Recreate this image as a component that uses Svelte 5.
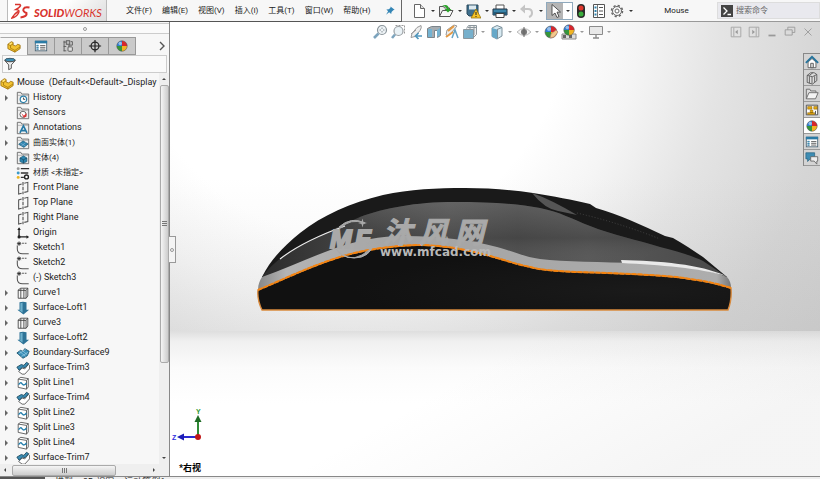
<script>
  const ball = `<path d="M8 8V2a6 6 0 0 0-6 6z" fill="#2f7fd6"/><path d="M8 8V2a6 6 0 0 1 6 6z" fill="#d8262c"/><path d="M8 8h6a6 6 0 0 1-6 6z" fill="#f0b323"/><path d="M8 8v6a6 6 0 0 1-6-6z" fill="#36963b"/><circle cx="6" cy="5" r="2" fill="#fff" opacity=".5"/><circle cx="8" cy="8" r="6" fill="none" stroke="#555" stroke-width=".6"/>`;
  const folder = `<path d="M1.500 14.500v-13h4l1 2h8v11z" fill="#eee" stroke="#666"/><path d="M2 5h12" stroke="#888" stroke-width=".6"/>`;

  // 16x16 icon bodies
  const icons = {
    part: `<path d="M1 6l4-3 2 1v3l3 1 2-2 3 1v4l-6 4-8-4z" fill="#f2c230" stroke="#9a6d08" stroke-width=".9"/><path d="M1 6l3 1.500 3-2M4 7.500v3l5 2.500 6-4M9 13v2" fill="none" stroke="#9a6d08" stroke-width=".8"/><path d="M2 6l3-2 1 .6L4 6.500z" fill="#ffe98a"/>`,
    props: `<rect x="1.500" y="2.500" width="13" height="11" fill="#fff" stroke="#4c6474"/><path d="M1 2h14v3H1z" fill="#2b7ba5"/><path d="M3 7h2v1H3zM3 9h2v1H3zM3 11h2v1H3z" fill="#2b7ba5" stroke="#2b7ba5" stroke-width=".5"/><path d="M7 7.500h6M7 9.500h6M7 11.500h6" stroke="#555"/>`,
    config: `<path d="M3.500 2v12M3 3.500h3M3 8.500h3M3 13.500h3" stroke="#555" fill="none"/><rect x="6" y="2" width="4" height="4" fill="#bbb" stroke="#555"/><path d="M11 3h2v4H9v3" fill="none" stroke="#555"/><rect x="8" y="9" width="5" height="5" rx="1" fill="#ddd" stroke="#555"/>`,
    target: `<circle cx="8" cy="8" r="4.500" fill="none" stroke="#222" stroke-width="1.400"/><path d="M8 1v14M1 8h14" stroke="#222" stroke-width="1.400"/>`,
    ball,
    filter: `<ellipse cx="8" cy="3.500" rx="6" ry="2" fill="#3d8fb5" stroke="#33505f"/><path d="M2 4l4.500 5v5.500l3-1.500V9L14 4c-3 2-9 2-12 0z" fill="#f0f0f0" stroke="#444"/>`,
    history: folder + `<circle cx="8.500" cy="9.500" r="3.700" fill="#fff" stroke="#2c7fa8" stroke-width="1.400"/><path d="M8.500 7.500v2h2" fill="none" stroke="#333"/>`,
    sensors: folder + `<circle cx="8" cy="9.500" r="3.500" fill="#fff" stroke="#555"/><path d="M6 8l3 3 3-3v4l-3 1.500z" fill="#d33"/>`,
    annotations: folder + `<path d="M4.500 13.500L8.500 5.500l4 8M6 11h5" fill="none" stroke="#2478a5" stroke-width="1.800"/>`,
    surfaces: folder + `<path d="M3 9.500l5-4 6 3.500-5 4z" fill="#2e86b0" stroke="#1c516b" stroke-width=".7"/><path d="M5 8l6 3.500M11 7.500l-5 4" stroke="#9bd" stroke-width=".6"/>`,
    solids: folder + `<path d="M4.500 8l4-2.500 4 2.500v4l-4 2-4-2z" fill="#2e86b0" stroke="#1c516b" stroke-width=".7"/><path d="M4.500 8l4 2 4-2M8.500 10v4" fill="none" stroke="#123d52" stroke-width=".7"/>`,
    material: `<circle cx="2.500" cy="3" r="1.700" fill="#999"/><circle cx="2.500" cy="8" r="1.700" fill="#3c9bc9"/><circle cx="2.500" cy="13" r="1.700" fill="#e9b320"/><path d="M5.500 3H15M5.500 8H14M5.500 13H9" stroke="#333" stroke-width="1.500"/><circle cx="12" cy="12.500" r="2.200" fill="#fff" stroke="#222" stroke-width="1.600"/>`,
    plane: `<path d="M6.500 3.500l-3.500 1v10.500l3.500-1M9.500 2.500l4-1v10.500l-4 1" fill="none" stroke="#555" stroke-width="1.200"/><path d="M8 1v14" stroke="#444" stroke-width="1.200" stroke-dasharray="4 1.500"/>`,
    origin: `<path d="M3.500 3v9.500H13" fill="none" stroke="#222" stroke-width="1.500"/><path d="M1.500 4.500l2-3 2 3zM12 10.500l3 2-3 2z" fill="#222"/><circle cx="3.500" cy="12.500" r="1.800" fill="#222"/>`,
    sketch: `<path d="M1.500 5v4q0 5.500 6 5.500h7M7 2.500h2M10 2.500h2" fill="none" stroke="#555" stroke-width="1.200"/><path d="M3.500.5v5M1 3h5M1.800 1.200l3.500 3.500M5.300 1.200L1.800 4.700" stroke="#222" stroke-width=".9"/>`,
    curve: `<path d="M2.500 4.500l3-2 8 0v9l-2 2.500h-9z" fill="#f5f5f5" stroke="#444"/><path d="M5.500 3v11M9 3v11M11.500 5v9M2.500 5h9l2-2.500" fill="none" stroke="#444"/>`,
    loft: `<path d="M4 1.500q4-1.500 8 0V10h3l-6.500 5.500L1.500 10H4z" fill="#2e7397"/><path d="M5 2.500q1-.5 2.500-.500v11L3.500 10.700H5z" fill="#6db0cc"/>`,
    boundary: `<path d="M1 8l4-3 3 1 2-3 5 3-2 5-5 3z" fill="#3a8fb8" stroke="#1c526c"/><path d="M4 6l7 6M7 5l6 5M3 9l8-5M6 12l8-5" stroke="#a7d6ea" stroke-width=".7"/>`,
    trim: `<path d="M3 12l4-4 3 1 4-5 1.500 1v4l-5.500 6-3 0z" fill="#fff" stroke="#555"/><path d="M1 7l5-3 3 1 3-3.500 2.500 1.500-4 4.500-3-.5L3.500 10.500z" fill="#3a8db4" stroke="#1d485e"/>`,
    split: `<path d="M2.500 3.500l3-2 8.500 1.500v9.500l-2 2.500-9.500-2z" fill="#fff" stroke="#555"/><path d="M2.500 3.500l9.500 1.500 2-2M12 5v10" fill="none" stroke="#555"/><path d="M3 10q2-4 4-1t5-1" fill="none" stroke="#2680ad" stroke-width="1.500"/>`,
    fresh: `<path d="M3.500 1.500h6l4 4v9h-10z" fill="#fff" stroke="#666"/><path d="M9.500 1.500v4h4" fill="#ddd" stroke="#666"/>`,
    open: `<path d="M1.500 13.500v-10h4l1 1.500h5v3" fill="#eee" stroke="#555"/><path d="M1.500 13.500l3-6H15l-3 6z" fill="#f8f8f8" stroke="#555"/><path d="M4 3q6-3 7 3h2.500L10 9.500 6.500 6H9Q8 3 4 3z" fill="#2aa32a"/>`,
    save: `<path d="M2 2h11v11H4l-2-2z" fill="#3e6e8c" stroke="#2c4a5c"/><path d="M4 2.500h7v4H4z" fill="#dce8ee"/><path d="M11 6l5 9H6z" fill="#f7c325" stroke="#8b6a00" stroke-width=".7"/><path d="M11 9v3M11 13v1" stroke="#222"/>`,
    print: `<path d="M4 2h8v5H4z" fill="#fff" stroke="#555"/><path d="M1 6h14v6H1z" fill="#3b86ab" stroke="#234"/><path d="M1 9h14v3H1z" fill="#265b78"/><path d="M4 10.500h8v4H4z" fill="#fff" stroke="#444"/>`,
    undo: `<path d="M3 6h6q4 0 4 4 0 3-3 4" fill="none" stroke="#c4c4c4" stroke-width="2"/><path d="M6 1.500v9L1 6z" fill="#c4c4c4"/>`,
    pointer: `<path d="M5 1.500v11l3-2.500 2 4.500 2-1-2-4.300 3.500-.2z" fill="#fff" stroke="#444" stroke-width=".9"/>`,
    traffic: `<rect x="4" y="1" width="8" height="14" rx="4" fill="#2a2a2a"/><circle cx="8" cy="5" r="2.500" fill="#e0362c"/><circle cx="8" cy="11" r="2.500" fill="#39ad3c"/>`,
    list: `<path d="M2.500 1.500h11v13h-11z" fill="#fff" stroke="#555"/><path d="M6.500 2v12" stroke="#777"/><path d="M3.500 3.500h2v2h-2zM3.500 7h2v2h-2zM3.500 10.500h2v2h-2z" fill="#2f82ab"/><path d="M8 4.500h4M8 8h4M8 11.500h4" stroke="#555"/>`,
    gear: `<circle cx="8" cy="8" r="5.500" fill="none" stroke="#666" stroke-width="1.500" stroke-dasharray="2.200 2.120"/><circle cx="8" cy="8" r="4.500" fill="#f7f7f7" stroke="#666"/><circle cx="8" cy="8" r="2" fill="#fff" stroke="#666"/>`,
    pin: `<path d="M8 2l6 5-2 .5-2.500 2.500-.5 3-3-2.500L1.500 14 4.500 9 2 6.500l3.500-.2L8 4z" fill="#3385b5"/>`,
    zoomfit: `<circle cx="10" cy="6" r="4.500" fill="#eef3f6" stroke="#8a949a" stroke-width="1.200"/><path d="M10 3.500v5M7.500 6h5" stroke="#8a949a" stroke-dasharray="1.500 2"/><path d="M6.500 9.500L2 14" stroke="#7da4bd" stroke-width="2.600"/>`,
    zoomarea: `<path d="M5.500 1.500h9v9" fill="none" stroke="#999" stroke-dasharray="2 1"/><circle cx="8.500" cy="7" r="4.500" fill="#eaf2f6" stroke="#9a9fa3" stroke-width="1.200"/><path d="M5 10.500L2 14" stroke="#7da4bd" stroke-width="2.600"/>`,
    prev: `<path d="M13 1.500q1 2-1 5l-5 6-4 1 1-4 5-6z" fill="#eee" stroke="#999"/><path d="M3 10l5-4" stroke="#999"/><path d="M14 12H8M10.500 9l-3 3 3 3" fill="none" stroke="#5197bd" stroke-width="1.700"/>`,
    section: `<path d="M1.500 4.500l4-2h9v9l-3 2v-7h-3v7h-7z" fill="#a6adb2" stroke="#7c858b"/><path d="M2 5h4v8H2zM11 6l3-2v7l-3 2z" fill="#74b3d2"/>`,
    dynamic: `<path d="M3 6l7-5 3 1-5 6-4 4-2-1z" fill="#eee" stroke="#999"/><path d="M4 7l6-5M2 13l7-5" stroke="#e49a44" stroke-width="2"/><path d="M8 14l3-8 3 8" fill="none" stroke="#67a4c4" stroke-width="1.500"/>`,
    orient: `<path d="M4.500 4.500l2-3h8v9l-3 3" fill="#eee" stroke="#8c979d"/><path d="M1.500 5.500h10v9h-10z" fill="#77b0cc" stroke="#8c979d"/><path d="M8 2v4M12 2v9M6 3.500h8" stroke="#8c979d"/>`,
    display: `<path d="M3 4l5-2.500 5 2V12l-5 3-5-2.500z" fill="#d8eaf2" stroke="#7e929d"/><path d="M3 4l5 1.500V15L3 12.500z" fill="#66a8c8"/><path d="M8 5.500l5-2M8.500 5v9.500" stroke="#7e929d"/>`,
    eye: `<path d="M1 8q7-7 14 0-7 7-14 0z" fill="#f4f4f4" stroke="#bbb"/><circle cx="8" cy="8" r="3" fill="#777"/><path d="M8 3v10" stroke="#666"/>`,
    appear: ball + `<path d="M7 14l1-4 5-4 2 2-4 5z" fill="#f3c98b" stroke="#a77" stroke-width=".6"/>`,
    scene: `<path d="M1 10h14v5H1z" fill="#ddd" stroke="#888"/><path d="M2 11h3v3H2zM8 11h3v3H8z" fill="#666"/><g transform="translate(1 -1) scale(.88)">${ball}</g>`,
    monitor: `<path d="M1.500 2.500h13v8h-13z" fill="#e8e8e8" stroke="#8b8b8b"/><path d="M8 10.500v3M5 14h6" stroke="#8b8b8b" stroke-width="1.400"/>`,
    home: `<path d="M3.500 8v6.500h9V8L8 4z" fill="#fff" stroke="#555"/><path d="M1 9l7-7 7 7" fill="none" stroke="#26749c" stroke-width="2.200"/><path d="M6.500 9.500h3v5h-3z" fill="#ddd" stroke="#555"/>`,
    library: `<path d="M2.500 5l4-3 4 0 3 2v7l-5 4-6-2z" fill="#ddd" stroke="#555"/><path d="M5 6v8M8 6.500v8M2.500 5l6 1.500 5-2.500M11 6v6.500M5 5l4-3" fill="none" stroke="#555"/>`,
    explorer: `<path d="M1.500 13.500v-11h4l1 2h6v2" fill="#ddd" stroke="#666"/><path d="M1.500 13.500l3-7H15l-3 7z" fill="#f4f4f4" stroke="#666"/>`,
    palette: `<path d="M1.500 2.500h13v11h-13z" fill="#fff" stroke="#444"/><path d="M3 4h5v3H3zM10 4h4v3h-4zM3 11h8v2H3zM6 8h3v3H6z" fill="#e5aa12" stroke="#735100" stroke-width=".5"/><path d="M12 9v4" stroke="#444"/>`,
    forum: `<path d="M1 2h10v7H6l-3 3V9H1z" fill="#3d8cb3" stroke="#27617f" stroke-width=".8"/><path d="M6.500 6.500h8v5h-1V15l-3-3.500h-4z" fill="#eee" stroke="#666"/>`,
    dockleft: `<path d="M2.500 2.500h11v11h-11zM5.500 3v10" fill="none" stroke="#a2a2a2"/><path d="M10 5.500v5L7 8z" fill="#999"/>`,
    dockright: `<path d="M2.500 2.500h11v11h-11zM10.500 3v10" fill="none" stroke="#a2a2a2"/><path d="M6 5.500v5L9 8z" fill="#999"/>`,
    minimize: `<path d="M4 11h8v2H4z" fill="#999"/>`,
    restore: `<path d="M5.500 5.500v-3h8v6h-3M2.500 5.500h8v6h-8z" fill="none" stroke="#999"/>`,
    close: `<path d="M4 4l8 8M12 4l-8 8" stroke="#999"/>`,
  };

  const menus = ['文件(F)', '编辑(E)', '视图(V)', '插入(I)', '工具(T)', '窗口(W)', '帮助(H)'];

  const fileTools = [
    { icon: 'fresh', label: 'New', more: true },
    { icon: 'open', label: 'Open', more: true },
    { icon: 'save', label: 'Save', more: true },
    { icon: 'print', label: 'Print', more: true },
    { icon: 'undo', label: 'Undo', more: true },
    { icon: 'pointer', label: 'Select', more: true, active: true },
    { icon: 'traffic', label: 'Rebuild' },
    { icon: 'list', label: 'File properties' },
    { icon: 'gear', label: 'Options', more: true },
  ];

  const viewTools = [
    { icon: 'zoomfit', label: 'Zoom to fit' },
    { icon: 'zoomarea', label: 'Zoom to area' },
    { icon: 'prev', label: 'Previous view' },
    { icon: 'section', label: 'Section view' },
    { icon: 'dynamic', label: 'Dynamic annotation' },
    { icon: 'orient', label: 'View orientation', more: true },
    { icon: 'display', label: 'Display style', more: true },
    { icon: 'eye', label: 'Hide or show', more: true },
    { icon: 'appear', label: 'Edit appearance' },
    { icon: 'scene', label: 'Apply scene', more: true },
    { icon: 'monitor', label: 'View settings', more: true },
  ];

  const panelTabs = ['part', 'props', 'config', 'target', 'ball'];
  const windowTools = ['dockleft', 'dockright', 'minimize', 'restore', 'close'];
  const taskTabs = ['home', 'library', 'explorer', 'palette', 'ball', 'props', 'forum'];

  const tree = [
    { icon: 'history', name: 'History', open: true },
    { icon: 'sensors', name: 'Sensors' },
    { icon: 'annotations', name: 'Annotations', open: true },
    { icon: 'surfaces', name: '曲面实体(1)', open: true, cjk: true },
    { icon: 'solids', name: '实体(4)', open: true, cjk: true },
    { icon: 'material', name: '材质 <未指定>', cjk: true },
    { icon: 'plane', name: 'Front Plane' },
    { icon: 'plane', name: 'Top Plane' },
    { icon: 'plane', name: 'Right Plane' },
    { icon: 'origin', name: 'Origin' },
    { icon: 'sketch', name: 'Sketch1' },
    { icon: 'sketch', name: 'Sketch2' },
    { icon: 'sketch', name: '(-) Sketch3' },
    { icon: 'curve', name: 'Curve1', open: true },
    { icon: 'loft', name: 'Surface-Loft1', open: true },
    { icon: 'curve', name: 'Curve3', open: true },
    { icon: 'loft', name: 'Surface-Loft2', open: true },
    { icon: 'boundary', name: 'Boundary-Surface9', open: true },
    { icon: 'trim', name: 'Surface-Trim3', open: true },
    { icon: 'split', name: 'Split Line1', open: true },
    { icon: 'trim', name: 'Surface-Trim4', open: true },
    { icon: 'split', name: 'Split Line2', open: true },
    { icon: 'split', name: 'Split Line3', open: true },
    { icon: 'split', name: 'Split Line4', open: true },
    { icon: 'trim', name: 'Surface-Trim7', open: true },
  ];

  let panelTab = $state('part');
  let taskTab = $state('ball');
  let search = $state('');
</script>

{#snippet icon(name)}
  <svg class="icon" viewBox="0 0 16 16" aria-hidden="true">{@html icons[name]}</svg>
{/snippet}

{#snippet tool(t)}
  <div class="tool" class:active={t.active}>
    <button class="tool-main" aria-label={t.label}>{@render icon(t.icon)}</button>
    {#if t.more}
      <button class="more" aria-label="{t.label} options"><i class="caret"></i></button>
    {/if}
  </div>
{/snippet}

<div class="app">
  <header>
    <div class="menubar">
      <div class="brand">
        <svg class="ds" viewBox="0 0 20 18" aria-hidden="true">
          <path d="M4 2.500h5q1.500 1-1.500 3.500L5 7.500q4 0 2.500 3.500-2 4-6.500 5 3-5 6-6.500" fill="none" stroke="#d8342e" stroke-width="1.500" />
          <path d="M18.500 5.500q-5-1-6 1.500t3 4q1 3.500-6 4.500" fill="none" stroke="#d8342e" stroke-width="2" />
        </svg>
        <span class="logo"><b>SOLID</b>WORKS</span>
      </div>
      <nav>
        {#each menus as menu}
          <button>{menu}</button>
        {/each}
      </nav>
      <button class="pin" aria-label="Pin">{@render icon('pin')}</button>
    </div>
    <div class="quickbar">
      {#each fileTools as t}
        {@render tool(t)}
      {/each}
      <span class="title">Mouse</span>
      <label class="search">
        <svg class="prompt" viewBox="0 0 12 12" aria-hidden="true">
          <rect width="12" height="12" fill="#444" />
          <path d="M2.500 2.500L6 6 2.500 9.500M6.500 9.500H10" fill="none" stroke="#fff" stroke-width="1.300" />
        </svg>
        <input type="text" placeholder="搜索命令" aria-label="搜索命令" bind:value={search} />
      </label>
    </div>
  </header>

  <main>
    <aside>
      <div class="grip"><i></i></div>
      <div class="tabs">
        {#each panelTabs as name}
          <button class:current={panelTab === name} aria-label={name} onclick={() => (panelTab = name)}>
            {@render icon(name)}
          </button>
        {/each}
        <button class="next" aria-label="More tabs">
          <svg viewBox="0 0 8 10" aria-hidden="true"><path d="M2 1l4 4-4 4" fill="none" stroke="#555" stroke-width="1.400" /></svg>
        </button>
      </div>
      <div class="filter">{@render icon('filter')}</div>
      <div class="tree-wrap">
        <ul class="tree">
          <li class="root">
            {@render icon('part')}
            <span>Mouse&nbsp; (Default&lt;&lt;Default&gt;_Display</span>
          </li>
          {#each tree as item}
            <li>
              <i class="twist" class:shown={item.open}></i>
              {@render icon(item.icon)}
              <span class:cjk={item.cjk}>{item.name}</span>
            </li>
          {/each}
        </ul>
        <div class="vscroll">
          <i class="arrow up"></i>
          <div class="thumb"></div>
          <i class="arrow down"></i>
        </div>
      </div>
      <div class="hscroll">
        <i class="arrow left"></i>
        <div class="thumb"></div>
        <i class="arrow right"></i>
      </div>
    </aside>

    <section class="viewport">
      <svg class="scene" viewBox="170 22 650 454" preserveAspectRatio="none" aria-label="Mouse model">
        <defs>
          <radialGradient id="wall" gradientUnits="userSpaceOnUse" cx="350" cy="20" r="600">
            <stop offset=".36" stop-color="#fff" />
            <stop offset=".48" stop-color="#f5f5f5" />
            <stop offset=".62" stop-color="#e4e4e4" />
            <stop offset=".8" stop-color="#d5d5d5" />
            <stop offset="1" stop-color="#cdcdcd" />
          </radialGradient>
          <linearGradient id="wallFoot" x1="0" y1="0" x2="0" y2="1">
            <stop offset=".5" stop-color="#888" stop-opacity="0" />
            <stop offset="1" stop-color="#888" stop-opacity=".1" />
          </linearGradient>
          <linearGradient id="floor" x1="0" y1="0" x2="0" y2="1">
            <stop offset="0" stop-color="#dedede" />
            <stop offset=".07" stop-color="#f0f0f0" />
            <stop offset=".25" stop-color="#fbfbfb" />
            <stop offset=".5" stop-color="#fff" />
          </linearGradient>
          <linearGradient id="floorSide" x1="0" y1="0" x2="1" y2=".4">
            <stop offset=".5" stop-color="#999" stop-opacity="0" />
            <stop offset="1" stop-color="#999" stop-opacity=".1" />
          </linearGradient>
          <linearGradient id="shell" x1="0" y1="0" x2="1" y2="0">
            <stop offset="0" stop-color="#2c2c2c" />
            <stop offset=".2" stop-color="#444" />
            <stop offset=".4" stop-color="#5a5a5a" />
            <stop offset=".55" stop-color="#505050" />
            <stop offset=".7" stop-color="#5a5a5a" />
            <stop offset="1" stop-color="#484848" />
          </linearGradient>
          <linearGradient id="shade" x1="0" y1="0" x2="0" y2="1">
            <stop offset="0" stop-color="#777" stop-opacity=".35" />
            <stop offset=".6" stop-color="#333" stop-opacity=".35" />
            <stop offset="1" stop-color="#666" stop-opacity="0" />
          </linearGradient>
          <linearGradient id="rim" x1="0" y1="0" x2="1" y2="0">
            <stop offset="0" stop-color="#888" />
            <stop offset=".06" stop-color="#b4b4b4" />
            <stop offset=".3" stop-color="#a4a4a4" />
            <stop offset=".97" stop-color="#adadad" />
            <stop offset="1" stop-color="#777" />
          </linearGradient>
          <radialGradient id="base" cx=".8" cy=".7" r=".6">
            <stop offset="0" stop-color="#1a1a1a" />
            <stop offset="1" stop-color="#111" />
          </radialGradient>
        </defs>
        <rect x="170" y="22" width="650" height="309" fill="url(#wall)" />
        <rect x="170" y="22" width="650" height="309" fill="url(#wallFoot)" />
        <rect x="170" y="331" width="650" height="145" fill="url(#floor)" />
        <rect x="170" y="331" width="650" height="145" fill="url(#floorSide)" />

        <path d="M262 277C271 259 284 246 300 233C323 215 350 203 383 195C410 189 437 188 465 188C490 188 512 190 533 193C553 196 573 200 590 204L596 208C620 215 642 225 665 236L673 238C685 245 694 251 703 257L727 277L700 275L270 280Z" fill="#1a1a1a" />
        <path d="M262 277C268 269 276 261 290 251C310 240 340 226 360 217C385 208 415 202 455 202C485 202 515 203 540 208C560 212 572 219 590 226C612 235 638 240 660 247C680 252 695 257 703 261L727 277L700 270L540 262L450 241L400 240L262 280Z" fill="url(#shell)" />
        <path d="M360 217C385 208 415 202 455 202C485 202 515 203 540 208C560 212 572 219 590 226C612 235 638 240 660 247L640 262L540 259L480 243L400 237L340 246Z" fill="url(#shade)" />
        <path d="M532 193Q550 199 577 215L558 211Q545 209 532 193Z" fill="#555" />
        <path d="M577 213Q620 223 660 239" fill="none" stroke="#444" stroke-dasharray="1 2" />
        <path d="M280 259Q303 241 345 226" fill="none" stroke="#eee" stroke-width="1.200" />

        <path d="M262 277C285 269 308 258 333 249C358 240 380 236 405 236C440 236 470 240 497 247C515 252 525 257 540 259C565 262 600 262 640 263C675 264 705 268 727 277C730 280 731 284 731 288C715 283 705 281 690 279C670 275 610 273 575 272C555 271 540 270 530 267C515 264 508 261 497 258C470 250 445 245 417 245C390 246 362 250 340 257C308 267 280 281 258 290C258 284 260 280 262 277Z" fill="url(#rim)" />
        <path d="M621 260C660 261 700 264 726 276C700 268 660 265 622 263Z" fill="#e9e9e9" />
        <path d="M258 290C280 281 308 267 340 257C362 250 390 246 417 245C445 245 470 250 497 258C508 261 515 264 530 267C540 270 555 271 575 272C610 273 670 275 690 279C705 281 715 283 731 288Q732 300 728 310H262Q257 300 258 290Z" fill="url(#base)" stroke="#d98a3c" stroke-width="1.400" />
        <path d="M258 290C280 281 308 267 340 257C362 250 390 246 417 245C445 245 470 250 497 258C508 261 515 264 530 267C540 270 555 271 575 272C610 273 670 275 690 279C705 281 715 283 731 288" fill="none" stroke="#f58410" stroke-width="2" stroke-dasharray="5 1" />

        <g fill="#a9a9a9" stroke="#a9a9a9">
          <path d="M339 227Q351 216 365 223Q350 218 341 228ZM336 249Q347 263 362 255Q371 250 374 243Q370 258 354 258Q341 257 336 249Z" />
          <path d="M362.500 218.500l1 3.500 3.500 1-3.500 1-1 3.500-1-3.500-3.500-1 3.500-1z" stroke="none" />
          <text class="mark-mf" x="330 355" y="248">MF</text>
          <text class="mark-name" x="383 419 455" y="243">沐风网</text>
          <text class="mark-url" x="380" y="256">www.mfcad.com</text>
        </g>
      </svg>

      <div class="view-row">
        <div class="view-tools">
          {#each viewTools as t}
            {@render tool(t)}
          {/each}
        </div>
        <div class="window-tools">
          {#each windowTools as name}
            <button aria-label={name}>{@render icon(name)}</button>
          {/each}
        </div>
      </div>

      <div class="task-pane">
        {#each taskTabs as name}
          <button class:current={taskTab === name} aria-label={name} onclick={() => (taskTab = name)}>
            {@render icon(name)}
          </button>
        {/each}
      </div>

      <button class="handle" aria-label="Collapse panel"><i></i></button>

      <div class="corner">
        <svg class="triad" viewBox="0 0 34 36" aria-hidden="true">
          <path d="M27 29V12" stroke="#2f8a35" stroke-width="2" />
          <path d="M23.500 14L27 7l3.500 7z" fill="#1e6b24" />
          <path d="M27 29H12" stroke="#2a2ad0" stroke-width="2" />
          <path d="M13 25.500L6 29l7 3.500z" fill="#1d1db8" />
          <circle cx="27" cy="29" r="3" fill="#c01818" />
          <text x="25" y="6" fill="#2f9a35">Y</text>
          <text x="1" y="32" fill="#3030e0">Z</text>
        </svg>
        <span class="view-name">*右视</span>
      </div>
    </section>
  </main>

  <footer>
    <span class="nav-strip"></span>
    <button>模型</button>
    <button>3D 视图</button>
    <button>运动算例1</button>
  </footer>
</div>

<style>
  :global(body) {
    margin: 0;
    overflow: hidden;
  }

  .app {
    display: flex;
    flex-direction: column;
    height: 100vh;
    background: #f7f7f7;
    color: #222;
    font-family: Roboto, "Noto Sans CJK SC", sans-serif;
    font-size: 9px;
    line-height: 15px;
  }

  button {
    display: flex;
    align-items: center;
    justify-content: center;
    padding: 0;
    border: 0;
    background: none;
    color: inherit;
    font: inherit;
  }

  .icon {
    display: block;
    flex: none;
    width: 16px;
    height: 16px;
  }

  header {
    display: flex;
    height: 22px;
    font-size: 8px;
  }

  .menubar {
    display: flex;
    flex: none;
    box-sizing: border-box;
    width: 402px;
    padding-left: 7px;
    border-right: 1px solid #666;
    border-bottom: 1px solid #555;
  }

  .brand {
    display: flex;
    align-items: center;
    gap: 3px;
    box-sizing: border-box;
    width: 100px;
    padding-left: 3px;
    border: solid #bbb;
    border-width: 0 1px;
    background: linear-gradient(135deg, #fff 50%, #ddd);
  }

  .ds {
    flex: none;
    width: 20px;
    height: 18px;
  }

  .logo {
    padding-top: 4px;
    color: #d8342e;
    font: italic 11px Lato, sans-serif;
  }

  .logo b {
    font-weight: 900;
  }

  nav {
    display: flex;
    gap: 10px;
    padding-left: 19px;
    white-space: nowrap;
  }

  .pin {
    margin: 0 5px 0 auto;
  }

  .pin .icon {
    width: 11px;
    height: 11px;
  }

  .quickbar {
    display: flex;
    flex: 1;
    align-items: center;
    padding-left: 9px;
    border-bottom: 1px solid #999;
  }

  .tool {
    display: flex;
    align-items: center;
  }

  .more {
    width: 11px;
    height: 16px;
  }

  .caret {
    border: 2px solid transparent;
    border-top-color: #333;
    border-bottom-width: 0;
  }

  .quickbar .tool:nth-child(7),
  .quickbar .tool:nth-child(8) {
    margin-right: 2px;
  }

  .tool.active {
    border: 1px solid #8fa9bd;
    background: #fff;
  }

  .tool.active .tool-main {
    background: #b5b5b5;
  }

  .tool.active .more {
    width: 9px;
  }

  .title {
    flex: 1;
    text-align: center;
  }

  .search {
    display: flex;
    align-items: center;
    gap: 3px;
    box-sizing: border-box;
    width: 103px;
    height: 17px;
    padding-left: 3px;
    border: 1px solid #ddd;
    background: #e9e9ee;
  }

  .prompt {
    flex: none;
    width: 12px;
    height: 12px;
  }

  .search input {
    flex: 1;
    min-width: 0;
    padding: 0;
    border: 0;
    outline: 0;
    background: none;
    font: inherit;
  }

  .search input::placeholder {
    color: #666;
  }

  main {
    display: flex;
    flex: 1;
    min-height: 0;
  }

  aside {
    display: flex;
    flex: none;
    flex-direction: column;
    box-sizing: border-box;
    width: 170px;
    border-right: 1px solid #888;
  }

  .grip {
    display: flex;
    align-items: center;
    justify-content: center;
    height: 9px;
    margin-top: 1px;
    border: solid #ccc;
    border-width: 1px 0;
    background: #fafafa;
  }

  .grip i,
  .handle i {
    width: 2px;
    height: 2px;
    border: 1px solid #999;
    border-radius: 50%;
  }

  .tabs {
    display: flex;
    height: 18px;
    margin-top: 3px;
  }

  .tabs button {
    box-sizing: border-box;
    width: 28px;
    margin-right: -1px;
    border: 1px solid #999;
    background: #cacaca;
  }

  .tabs .icon {
    width: 14px;
    height: 14px;
  }

  .tabs .current {
    border-color: #aaa transparent transparent;
    background: #f7f7f7;
  }

  .tabs .next {
    width: 12px;
    margin: 0 1px 0 auto;
    border: 0;
    background: none;
  }

  .next svg {
    width: 8px;
    height: 10px;
  }

  .filter {
    box-sizing: border-box;
    height: 18px;
    margin: 0 2px;
    border: 1px solid #ccc;
    background: #fafafa;
  }

  .filter .icon {
    width: 14px;
  }

  .tree-wrap {
    display: flex;
    flex: 1;
    min-height: 0;
  }

  .tree {
    flex: 1;
    min-width: 0;
    margin: 0;
    padding: 2px 0 0;
    overflow: hidden;
    list-style: none;
    white-space: nowrap;
  }

  .tree li {
    display: flex;
    align-items: center;
    gap: 3px;
    height: 15px;
  }

  .tree .icon {
    width: 14px;
    height: 14px;
  }

  .tree .cjk {
    font-size: 8px;
  }

  .twist {
    flex: none;
    width: 13px;
  }

  .twist.shown::before {
    content: "";
    display: block;
    width: 0;
    margin-left: 5px;
    border: 3px solid transparent;
    border-left-color: #666;
    border-right-width: 0;
  }

  .vscroll {
    display: flex;
    flex-direction: column;
    align-items: center;
    width: 10px;
    background: #efefef;
  }

  .thumb {
    box-sizing: border-box;
    border: 1px solid #aaa;
    border-radius: 2px;
  }

  .vscroll .thumb {
    width: 9px;
    height: 71%;
    margin-bottom: auto;
    background: repeating-linear-gradient(#777 0 1px, transparent 1px 2px) center / 5px 5px no-repeat, linear-gradient(90deg, #f5f5f5, #ccc);
  }

  .hscroll {
    display: flex;
    align-items: center;
    height: 12px;
    padding: 0 14px 0 4px;
    background: #efefef;
  }

  .hscroll .thumb {
    width: 104px;
    height: 11px;
    margin: 0 auto 0 6px;
    background: repeating-linear-gradient(90deg, #777 0 1px, transparent 1px 2px) center / 5px 5px no-repeat, linear-gradient(#f5f5f5, #ccc);
  }

  .arrow {
    border: 2px solid transparent;
  }

  .up {
    margin: 3px 0 5px;
    border-bottom-color: #444;
  }

  .down {
    margin-bottom: 3px;
    border-top-color: #444;
  }

  .left {
    border-right-color: #444;
    border-left-width: 0;
  }

  .right {
    border-left-color: #444;
    border-right-width: 0;
  }

  .viewport {
    position: relative;
    display: flex;
    flex: 1;
    flex-direction: column;
    min-width: 0;
    background: #fff;
  }

  .scene {
    position: absolute;
    inset: 0;
    width: 100%;
    height: 100%;
  }

  .mark-mf {
    font: italic bold 26px "Liberation Sans", sans-serif;
    stroke-width: 2px;
  }

  .mark-name {
    font: italic bold 29px "Noto Sans CJK SC", sans-serif;
    stroke-width: 1px;
  }

  .mark-url {
    font: bold 12px "DejaVu Sans", sans-serif;
    fill: #b8b8b8;
    stroke: none;
  }

  .view-row {
    position: relative;
    display: grid;
    grid-template-columns: 1fr auto 1fr;
    padding: 2px 5px 0 0;
  }

  .view-tools {
    display: flex;
    grid-column: 2;
    gap: 2px;
  }

  .view-tools .more {
    width: 9px;
  }

  .view-tools .caret {
    border-top-color: #999;
  }

  .window-tools {
    display: flex;
    justify-content: flex-end;
    gap: 4px;
  }

  .window-tools .icon {
    width: 14px;
    height: 14px;
  }

  .task-pane {
    position: relative;
    align-self: flex-end;
    margin-top: 13px;
    border: solid #888;
    border-width: 1px 0 0 1px;
  }

  .task-pane button {
    box-sizing: border-box;
    width: 16px;
    height: 16px;
    border-bottom: 1px solid #999;
    background: #d4d4d4;
  }

  .task-pane .icon {
    width: 14px;
    height: 14px;
  }

  .task-pane .current {
    background: #fff;
  }

  .handle {
    position: absolute;
    top: 214px;
    left: -1px;
    width: 7px;
    height: 27px;
    border: 1px solid #999;
    border-left: 0;
    background: #f4f4f4;
  }

  .corner {
    position: relative;
    display: flex;
    flex-direction: column;
    gap: 17px;
    margin-top: auto;
    padding: 0 0 0 1px;
  }

  .triad {
    width: 34px;
    height: 36px;
    font: bold 7px "Liberation Sans", sans-serif;
    overflow: visible;
  }

  .view-name {
    padding-left: 8px;
    color: #000;
    font-weight: bold;
  }

  footer {
    display: flex;
    gap: 10px;
    height: 2px;
    border-top: 1px solid #888;
    overflow: hidden;
    background: #eee;
    line-height: 10px;
  }

  footer button {
    align-items: flex-start;
    height: 10px;
  }

  .nav-strip {
    width: 45px;
    background: #555;
  }
</style>
